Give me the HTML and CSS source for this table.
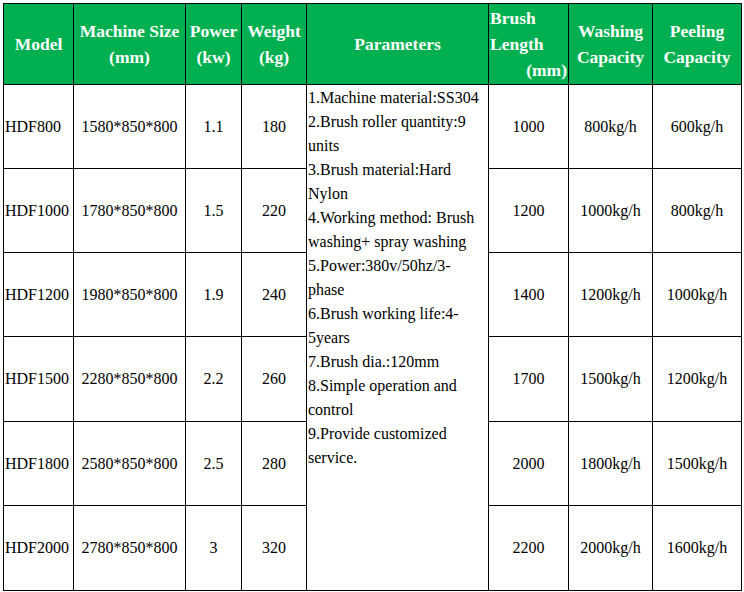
FILE: index.html
```html
<!DOCTYPE html>
<html>
<head>
<meta charset="utf-8">
<link rel="stylesheet" href="styles.css">
</head>
<body>
<div class="wrap">
<table class="spec">
<colgroup>
<col class="c1"><col class="c2"><col class="c3"><col class="c4"><col class="c5"><col class="c6"><col class="c7"><col class="c8">
</colgroup>
<thead>
<tr class="head">
<th>Model</th>
<th>Machine Size (mm)</th>
<th>Power (kw)</th>
<th>Weight (kg)</th>
<th>Parameters</th>
<th class="brush"><span class="bl">Brush</span><span class="bl">Length</span><span class="br">(mm)</span></th>
<th>Washing Capacity</th>
<th>Peeling Capacity</th>
</tr>
</thead>
<tbody>
<tr class="row a">
<td class="model">HDF800</td>
<td>1580*850*800</td>
<td>1.1</td>
<td>180</td>
<td class="params" rowspan="6">1.Machine material:SS304<br>2.Brush roller quantity:9 units<br>3.Brush material:Hard Nylon<br>4.Working method: Brush washing+ spray washing<br>5.Power:380v/50hz/3-phase<br>6.Brush working life:4-5years<br>7.Brush dia.:120mm<br>8.Simple operation and control<br>9.Provide customized service.</td>
<td>1000</td>
<td>800kg/h</td>
<td>600kg/h</td>
</tr>
<tr class="row a">
<td class="model">HDF1000</td>
<td>1780*850*800</td>
<td>1.5</td>
<td>220</td>
<td>1200</td>
<td>1000kg/h</td>
<td>800kg/h</td>
</tr>
<tr class="row a">
<td class="model">HDF1200</td>
<td>1980*850*800</td>
<td>1.9</td>
<td>240</td>
<td>1400</td>
<td>1200kg/h</td>
<td>1000kg/h</td>
</tr>
<tr class="row b">
<td class="model">HDF1500</td>
<td>2280*850*800</td>
<td>2.2</td>
<td>260</td>
<td>1700</td>
<td>1500kg/h</td>
<td>1200kg/h</td>
</tr>
<tr class="row a">
<td class="model">HDF1800</td>
<td>2580*850*800</td>
<td>2.5</td>
<td>280</td>
<td>2000</td>
<td>1800kg/h</td>
<td>1500kg/h</td>
</tr>
<tr class="row b">
<td class="model">HDF2000</td>
<td>2780*850*800</td>
<td>3</td>
<td>320</td>
<td>2200</td>
<td>2000kg/h</td>
<td>1600kg/h</td>
</tr>
</tbody>
</table>
</div>
</body>
</html>
```

FILE: styles.css
```css
html, body {
  margin: 0;
  padding: 0;
  background: #ffffff;
}
.wrap {
  padding: 3px;
}
.spec {
  border-collapse: collapse;
  table-layout: fixed;
  width: 738px;
  font-family: "Liberation Serif", "Times New Roman", serif;
  color: #000000;
}
.c1 { width: 70px; }
.c2 { width: 112px; }
.c3 { width: 56px; }
.c4 { width: 65px; }
.c5 { width: 182px; }
.c6 { width: 80px; }
.c7 { width: 84px; }
.c8 { width: 89px; }
.spec th, .spec td {
  border: 1px solid #000000;
  padding: 1px;
}
.head {
  height: 79px;
}
.spec th {
  background: #00b050;
  color: #ffffff;
  font-weight: bold;
  font-size: 17.5px;
  line-height: 26px;
  text-align: center;
  vertical-align: middle;
}
.spec th.brush {
  text-align: left;
}
.bl {
  display: block;
}
.br {
  display: block;
  text-align: right;
}
.spec td {
  font-size: 16px;
  line-height: 24px;
  text-align: center;
  vertical-align: middle;
}
.row.a { height: 84px; }
.row.b { height: 85px; }
.spec td.model {
  text-align: left;
}
.spec td.params {
  text-align: left;
  vertical-align: top;
}
```
